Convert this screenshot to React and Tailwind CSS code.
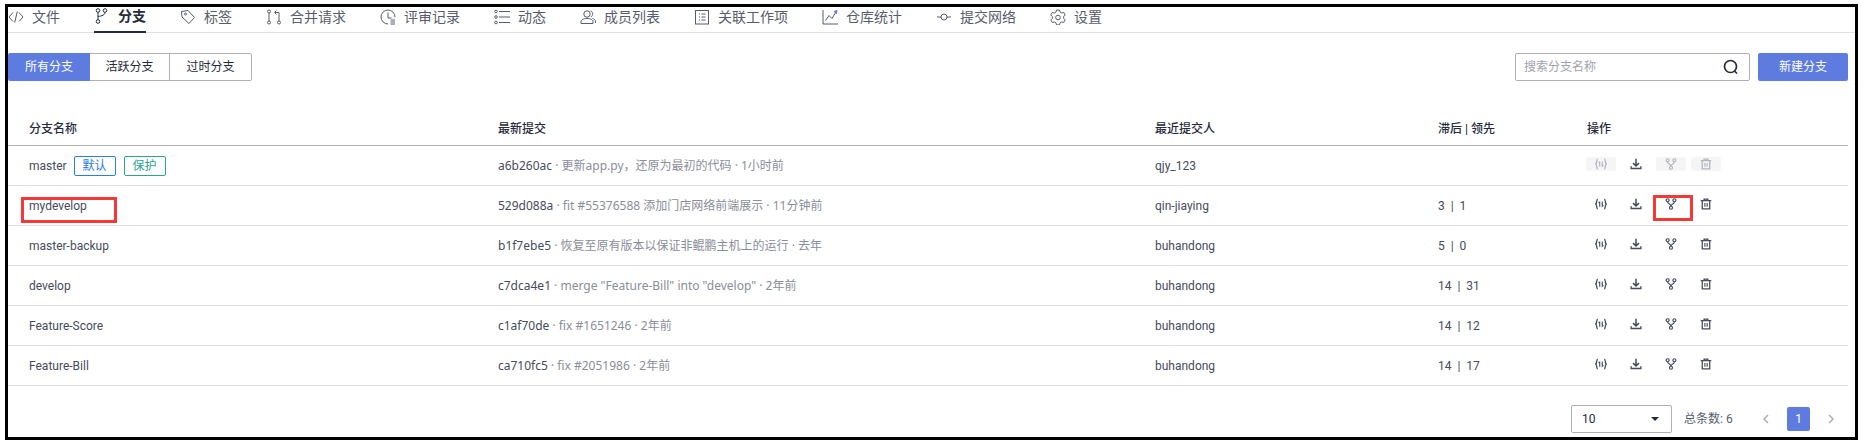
import React from 'react';

const Svg = ({ size = 16, className = '', children }) => (
  <svg
    width={size}
    height={size}
    viewBox="0 0 16 16"
    fill="none"
    stroke="currentColor"
    strokeWidth="1"
    className={`shrink-0 ${className}`}
  >
    {children}
  </svg>
);

const CodeIcon = () => (
  <Svg>
    <path d="M5 3.500 1 8l4 4.500M11 3.500l4 4.500-4 4.500M9.300 2.500 6.700 13.500" />
  </Svg>
);
const BranchIcon = () => (
  <Svg className="text-[#252b3a]">
    <circle cx="4" cy="2.500" r="1.800" />
    <circle cx="11" cy="2.500" r="1.800" />
    <circle cx="4" cy="13.500" r="1.800" />
    <path d="M4 4.300v7.400M11 4.300C11 7 8 8 4 8.500" />
  </Svg>
);
const TagIcon = () => (
  <Svg>
    <path d="M1.500 2.500 8 1.500l6.500 7-5.500 6-7-6.500z" />
    <circle cx="5.500" cy="5" r="1" />
  </Svg>
);
const MergeIcon = () => (
  <Svg>
    <circle cx="3" cy="2.500" r="1.500" />
    <circle cx="3" cy="13.500" r="1.500" />
    <circle cx="13" cy="13.500" r="1.500" />
    <path d="M3 4v8M13 12V3.500H9M10.500 1.500 8.500 3.500l2 2" />
  </Svg>
);
const ReviewIcon = () => (
  <Svg>
    <path d="M8 15A7 7 0 1 1 15 8" />
    <path d="M8 3.500V9h3.500M10.500 11h4.500M10.500 13h4.500M10.500 15h4.500" />
  </Svg>
);
const ActivityIcon = () => (
  <Svg>
    <circle cx="2" cy="2.500" r="1.300" />
    <circle cx="2" cy="8" r="1.300" />
    <circle cx="2" cy="13.500" r="1.300" />
    <path d="M5 2.500h11M5 8h11M5 13.500h11" strokeWidth="1.200" />
  </Svg>
);
const MembersIcon = () => (
  <Svg>
    <circle cx="7" cy="5" r="3.200" />
    <path d="M1 14.500V13C1 10.500 3.500 9.500 7 9.500s6 1 6 3.500v1.500zM10.500 2c2.500.3 3 4.500.5 6M12.500 9.500c1.700.4 3 1.500 3 3.500v1" />
  </Svg>
);
const ItemsIcon = () => (
  <Svg>
    <rect x="1.500" y="1.500" width="13" height="13.500" />
    <path d="M5 5h1M7.500 5h4M5 8h1M7.500 8h4M5 11h1M7.500 11h4" />
  </Svg>
);
const StatsIcon = () => (
  <Svg>
    <path d="M1 1v14h15M3.500 11.500 7 6.500l3 3 3.500-6" />
    <path d="M12 2.500 15 1.500l-.5 3z" fill="#5e7ce0" stroke="#5e7ce0" />
  </Svg>
);
const NetworkIcon = () => (
  <Svg>
    <circle cx="8" cy="8" r="3" />
    <path d="M1 8h4M11 8h4" />
  </Svg>
);
const GearIcon = () => (
  <Svg>
    <path d="M6.500 1h3l.5 2 1.700 1 2-.6 1.500 2.600-1.500 1.500v1.900l1.500 1.500-1.500 2.600-2-.6-1.700 1-.5 2h-3l-.5-2-1.700-1-2 .6L.8 10.900l1.500-1.500V7.500L.8 6l1.500-2.600 2 .6 1.700-1z" />
    <circle cx="8" cy="8.500" r="2.300" />
  </Svg>
);

const SyncIcon = () => (
  <Svg size={12}>
    <path d="M3.800 1.500C1.500 1.500 3 6.500 1 8c2 1.500.5 6.500 2.800 6.500M12.200 1.500C14.500 1.500 13 6.500 15 8c-2 1.500-.5 6.500-2.800 6.500" strokeWidth="1.800" />
    <path d="M6.300 5v6.500M4.800 6.500 6.300 5M9.700 4.500V11l1.500-1.500" strokeWidth="1.500" />
  </Svg>
);
const DownloadIcon = () => (
  <Svg size={12}>
    <path d="M8 1v9M4 6.800l4 3.700 4-3.700" strokeWidth="2" />
    <path d="M1.500 11v3h13v-3" strokeWidth="1.800" />
  </Svg>
);
const ForkIcon = () => (
  <Svg size={12}>
    <circle cx="3.500" cy="3" r="2" strokeWidth="1.600" />
    <circle cx="12.500" cy="3" r="2" strokeWidth="1.600" />
    <circle cx="8" cy="13" r="2" strokeWidth="1.600" />
    <path d="M3.500 5c0 3.500 4.500 2.500 4.500 6M12.500 5c0 3.500-4.500 2.500-4.500 6" strokeWidth="1.600" />
  </Svg>
);
const TrashIcon = () => (
  <Svg size={12}>
    <path d="M1 3.500h14M5.500 3.500V1.500h5v2M3 3.500v11h10v-11" strokeWidth="1.700" />
    <path d="M6.500 6.500v5M9.500 6.500v5" strokeWidth="1.500" />
  </Svg>
);

const navItems = [
  { label: '文件', icon: CodeIcon },
  { label: '分支', icon: BranchIcon, active: true },
  { label: '标签', icon: TagIcon },
  { label: '合并请求', icon: MergeIcon },
  { label: '评审记录', icon: ReviewIcon },
  { label: '动态', icon: ActivityIcon },
  { label: '成员列表', icon: MembersIcon },
  { label: '关联工作项', icon: ItemsIcon },
  { label: '仓库统计', icon: StatsIcon },
  { label: '提交网络', icon: NetworkIcon },
  { label: '设置', icon: GearIcon },
];

const branches = [
  { name: 'master', hash: 'a6b260ac', msg: '更新app.py，还原为最初的代码', time: '1小时前', author: 'qjy_123', isDefault: true },
  { name: 'mydevelop', hash: '529d088a', msg: 'fit #55376588 添加门店网络前端展示', time: '11分钟前', author: 'qin-jiaying', behind: 3, ahead: 1, marked: true },
  { name: 'master-backup', hash: 'b1f7ebe5', msg: '恢复至原有版本以保证非鲲鹏主机上的运行', time: '去年', author: 'buhandong', behind: 5, ahead: 0 },
  { name: 'develop', hash: 'c7dca4e1', msg: 'merge "Feature-Bill" into "develop"', time: '2年前', author: 'buhandong', behind: 14, ahead: 31 },
  { name: 'Feature-Score', hash: 'c1af70de', msg: 'fix #1651246', time: '2年前', author: 'buhandong', behind: 14, ahead: 12 },
  { name: 'Feature-Bill', hash: 'ca710fc5', msg: 'fix #2051986', time: '2年前', author: 'buhandong', behind: 14, ahead: 17 },
];

const GRID = 'grid grid-cols-[469px_657px_283px_150px_1fr] pl-[21px] items-center';

function ActionBtn({ disabled, children }) {
  return (
    <span
      className={`flex h-[14px] w-[30px] items-center justify-center rounded-[2px] ${
        disabled ? 'bg-[#f5f5f6] text-[#b4b6be]' : 'text-[#464c5b]'
      }`}
    >
      {children}
    </span>
  );
}

function Row({ b }) {
  const locked = b.isDefault;
  return (
    <div className={`${GRID} h-10 border-b border-[#dfe1e6] text-[#464c5b]`}>
      <div className="relative flex items-center gap-[7px]">
        <span>{b.name}</span>
        {b.isDefault && (
          <>
            <span className="flex h-5 w-[42px] items-center justify-center rounded-[2px] border border-[#2a7de9] text-[#2a7de9]">默认</span>
            <span className="ml-px flex h-5 w-[42px] items-center justify-center rounded-[2px] border border-[#2ba58f] text-[#2ba58f]">保护</span>
          </>
        )}
        {b.marked && (
          <span className="absolute -left-2 -top-px h-[26px] w-[96px] border-[3px] border-[#f73838]" />
        )}
      </div>
      <div className="whitespace-nowrap font-['Noto_Sans','Noto_Sans_CJK_SC',sans-serif]">
        <span>{b.hash}</span>
        <span className="text-[#8a8e99]"> · {b.msg} · {b.time}</span>
      </div>
      <div>{b.author}</div>
      <div className="whitespace-pre">{b.behind !== undefined ? `${b.behind}  |  ${b.ahead}` : ''}</div>
      <div className="relative mb-[3px] -ml-[2px] flex items-center gap-[5px]">
        <ActionBtn disabled={locked}><SyncIcon /></ActionBtn>
        <ActionBtn><DownloadIcon /></ActionBtn>
        <ActionBtn disabled={locked}><ForkIcon /></ActionBtn>
        <ActionBtn disabled={locked}><TrashIcon /></ActionBtn>
        {b.marked && (
          <span className="absolute left-[67px] -top-[2px] h-[26px] w-[40px] border-[3px] border-[#f73838]" />
        )}
      </div>
    </div>
  );
}

export default function App() {
  return (
    <div className="h-[443px] w-[1863px] bg-white pl-[5px] pt-[4px] font-['Roboto','Noto_Sans_CJK_SC',sans-serif] text-xs text-[#575d6c]">
      <div className="h-[436px] w-[1853px] border-[3px] border-black">
        <nav className="flex h-[26px] gap-[34px] border-b border-[#dfe1e6] text-sm">
          {navItems.map(({ label, icon: Icon, active }) => (
            <div
              key={label}
              className={`flex h-[26px] items-center gap-2 pb-[7px] ${
                active ? 'border-b-2 border-[#252b3a] font-bold text-[#252b3a]' : ''
              }`}
            >
              <Icon />
              <span>{label}</span>
            </div>
          ))}
        </nav>

        <div className="w-[1840px]">
          <div className="mt-5 flex justify-between">
            <div className="flex h-7">
              <button className="w-[82px] rounded-l-[2px] bg-[#5e7ce0] text-white">所有分支</button>
              <button className="w-[80px] border-y border-r border-[#adb0b8] text-[#252b3a]">活跃分支</button>
              <button className="w-[82px] rounded-r-[2px] border-y border-r border-[#adb0b8] text-[#252b3a]">过时分支</button>
            </div>
            <div className="flex h-7 gap-2">
              <div className="flex w-[235px] items-center justify-between rounded-[2px] border border-[#adb0b8] pl-2 pr-[10px]">
                <span className="text-[#a0a3ac]">搜索分支名称</span>
                <svg width="16" height="16" viewBox="0 0 16 16" fill="none" stroke="#252b3a" strokeWidth="1.700">
                  <circle cx="7.500" cy="7.500" r="6" />
                  <path d="m11.500 12 2.500 2.500" />
                </svg>
              </div>
              <button className="w-[90px] rounded-[2px] bg-[#5e7ce0] text-white">新建分支</button>
            </div>
          </div>

          <div className={`${GRID} mt-[25px] h-10 border-b border-[#adb0b8] pt-[6px] font-medium text-[#252b3a]`}>
            <div>分支名称</div>
            <div>最新提交</div>
            <div>最近提交人</div>
            <div>滞后 | 领先</div>
            <div className="-ml-px">操作</div>
          </div>
          {branches.map((b) => (
            <Row key={b.name} b={b} />
          ))}

          <div className="mt-[19px] flex items-center justify-end pr-[12px]">
            <div className="flex h-7 w-[101px] items-center justify-between rounded-[2px] border border-[#adb0b8] pl-[10px] pr-3 text-[#252b3a]">
              <span>10</span>
              <span className="h-0 w-0 border-x-[4px] border-t-[4px] border-x-transparent border-t-[#252b3a]" />
            </div>
            <span className="ml-3 w-[50px] whitespace-nowrap">总条数: 6</span>
            <svg className="ml-[27px]" width="10" height="12" viewBox="0 0 10 12" fill="none" stroke="#adb0b8" strokeWidth="1.500">
              <path d="M7 2 3 6l4 4" />
            </svg>
            <span className="ml-4 flex h-6 w-[23px] items-center justify-center rounded-[2px] bg-[#5e7ce0] text-white">1</span>
            <svg className="ml-4" width="10" height="12" viewBox="0 0 10 12" fill="none" stroke="#adb0b8" strokeWidth="1.500">
              <path d="m3 2 4 4-4 4" />
            </svg>
          </div>
        </div>
      </div>
    </div>
  );
}
